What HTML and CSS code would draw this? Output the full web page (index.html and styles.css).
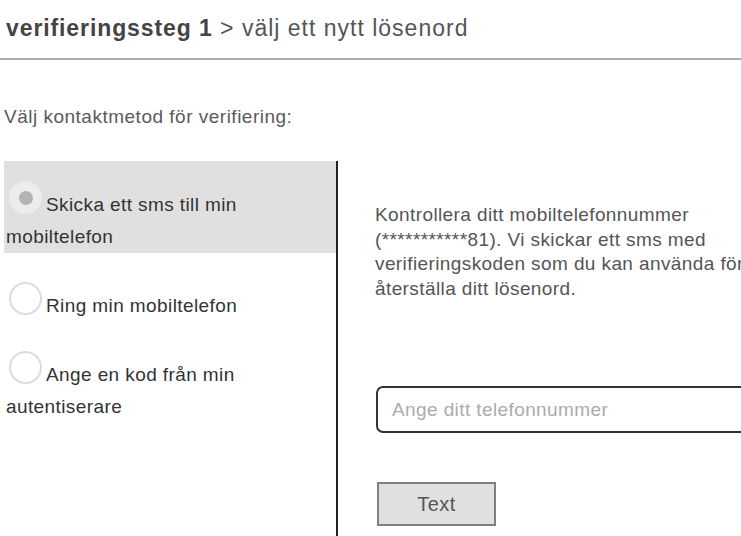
FILE: index.html
```html
<!DOCTYPE html>
<html lang="sv">
<head>
<meta charset="utf-8">
<title>Verifieringssteg 1</title>
<link rel="stylesheet" href="styles.css">
</head>
<body>
<div class="page">
  <h1 class="title"><span class="title-step">verifieringssteg 1</span> &gt; välj ett nytt lösenord</h1>
  <div class="rule"></div>
  <p class="prompt">Välj kontaktmetod för verifiering:</p>
  <div class="columns">
    <div class="options">
      <div class="option option-selected"><span class="radio radio-on"><span class="radio-dot"></span></span>Skicka ett sms till min mobiltelefon</div>
      <div class="option"><span class="radio"></span>Ring min mobiltelefon</div>
      <div class="option"><span class="radio"></span>Ange en kod från min autentiserare</div>
    </div>
    <div class="detail">
      <p class="detail-text">Kontrollera ditt mobiltelefonnummer (***********81). Vi skickar ett sms med verifieringskoden som du kan använda för att återställa ditt lösenord.</p>
      <div class="field"><span class="placeholder">Ange ditt telefonnummer</span></div>
      <div class="button">Text</div>
    </div>
  </div>
</div>
</body>
</html>
```

FILE: styles.css
```css
html, body {
  margin: 0;
  padding: 0;
  overflow: hidden;
  background: #ffffff;
}

body {
  font-family: "Liberation Sans", Arial, Helvetica, sans-serif;
  color: #555555;
}

.page {
  padding-top: 16px;
  width: 741px;
  overflow: hidden;
}

.title {
  margin: 0 0 17px 0;
  padding-left: 6px;
  font-size: 23px;
  font-weight: normal;
  letter-spacing: 1px;
  line-height: 25px;
  color: #555555;
  white-space: nowrap;
}

.title-step {
  font-weight: bold;
  color: #444444;
  letter-spacing: 0.9px;
}

.rule {
  height: 2px;
  background: #ababab;
}

.prompt {
  margin: 46px 0 0 0;
  padding-left: 4px;
  font-size: 19px;
  line-height: 22px;
  letter-spacing: 0.5px;
  color: #5a5a5a;
}

.columns {
  display: flex;
  margin-top: 33px;
  padding-left: 4px;
  min-height: 380px;
}

.options {
  flex: 0 0 332px;
  border-right: 2px solid #222222;
}

.option {
  padding: 20px 0 0 2px;
  margin-bottom: 9px;
  font-size: 19px;
  line-height: 32px;
  letter-spacing: 0.4px;
  color: #333333;
}

.option-selected {
  background: #e0e0e0;
}

.radio {
  display: inline-block;
  box-sizing: border-box;
  width: 33px;
  height: 33px;
  margin: 0 4px 0 3px;
  border: 2px solid #dcdcdc;
  border-radius: 50%;
  background: #ffffff;
  vertical-align: -3px;
  position: relative;
}

.radio-on {
  border-color: #ececec;
  background: #ececec;
}

.radio-dot {
  position: absolute;
  left: 7.5px;
  top: 7.5px;
  width: 14px;
  height: 14px;
  border-radius: 50%;
  background: #b3b3b3;
}

.detail {
  flex: 0 0 460px;
  padding-left: 37px;
  padding-top: 42px;
}

.detail-text {
  margin: 0;
  width: 420px;
  font-size: 19px;
  line-height: 24.5px;
  letter-spacing: 0.4px;
  color: #555555;
}

.field {
  box-sizing: border-box;
  margin: 85px 0 0 1px;
  width: 420px;
  height: 47px;
  border: 2px solid #333333;
  border-radius: 7px;
  padding: 0 0 0 14px;
  display: flex;
  align-items: center;
}

.placeholder {
  font-size: 19px;
  letter-spacing: 0.4px;
  color: #ababab;
}

.button {
  box-sizing: border-box;
  margin: 49px 0 0 2px;
  width: 119px;
  height: 44px;
  border: 2px solid #808080;
  background: #e0e0e0;
  display: flex;
  align-items: center;
  justify-content: center;
  font-size: 20px;
  letter-spacing: 0.5px;
  color: #555555;
}
```
